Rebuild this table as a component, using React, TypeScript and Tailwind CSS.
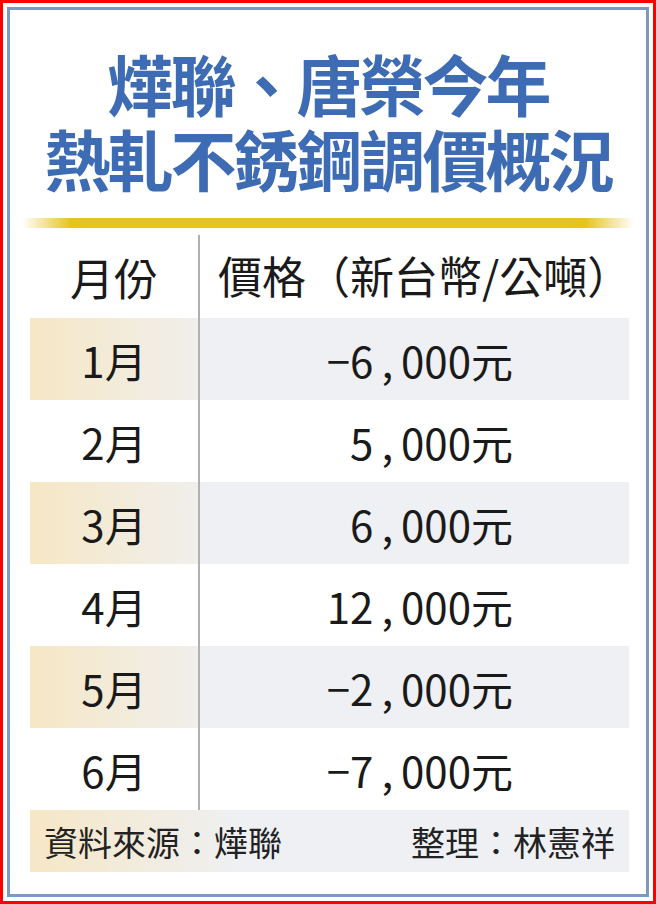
const rows = [
  { month: "1月", price: "−6,000元", shaded: true },
  { month: "2月", price: "5,000元", shaded: false },
  { month: "3月", price: "6,000元", shaded: true },
  { month: "4月", price: "12,000元", shaded: false },
  { month: "5月", price: "−2,000元", shaded: true },
  { month: "6月", price: "−7,000元", shaded: false },
];

const font = { fontFamily: '"Noto Sans CJK TC", "Noto Sans", sans-serif' };

// the comma in the print layout sits in a wide gap
function Price({ value }: { value: string }) {
  const [head, tail] = value.split(",");
  return (
    <span>
      {head}
      <span className="mx-[8px]">,</span>
      {tail}
    </span>
  );
}

export default function App() {
  return (
    <div
      className="w-[656px] h-[904px] bg-white border-[3px] border-[#ff0000] p-[4px]"
      style={font}
    >
      <div className="h-full border-[3px] border-[#7b98c6] flex flex-col">
        {/* Title */}
        <div className="pt-[35px] text-center text-[#3d6bb4] font-bold text-[66px] leading-[75px] tracking-[-3px]">
          <div>燁聯、唐榮今年</div>
          <div>熱軋不銹鋼調價概況</div>
        </div>

        {/* Gold rule */}
        <div className="mt-[23px] mx-[12px] h-[10px] bg-[linear-gradient(to_right,transparent,#e6c31e_8%,#e6c31e_92%,transparent)]" />

        {/* Table */}
        <div className="mt-[4px] ml-[20px] mr-[17px] text-[#1a1a1a]">
          <div className="flex h-[86px] items-center">
            <div className="w-[170px] self-stretch flex items-center justify-center border-r-[2px] border-[#b0b0b0] mt-[3px] text-[44px]">
              月份
            </div>
            <div className="flex-1 pl-[18px] text-[44px]">價格（新台幣/公噸）</div>
          </div>

          {rows.map((r) => (
            <div key={r.month} className="flex h-[82px]">
              <div
                className={`w-[170px] flex items-center justify-center border-r-[2px] border-[#b0b0b0] text-[42px] ${
                  r.shaded ? "bg-gradient-to-r from-[#f6e7c5] to-[#f0efec]" : "bg-white"
                }`}
              >
                {r.month}
              </div>
              <div
                className={`flex-1 flex items-center justify-end pr-[116px] text-[42px] ${
                  r.shaded ? "bg-[#eef0f3]" : "bg-white"
                }`}
              >
                <Price value={r.price} />
              </div>
            </div>
          ))}

          {/* Footer */}
          <div className="h-[62px] flex items-center justify-between px-[14px] text-[34px] text-[#222] bg-gradient-to-r from-[#f6e7c5] via-[#eef0f3] via-35% to-[#eef0f3]">
            <span>資料來源：燁聯</span>
            <span>整理：林憲祥</span>
          </div>
        </div>
      </div>
    </div>
  );
}
